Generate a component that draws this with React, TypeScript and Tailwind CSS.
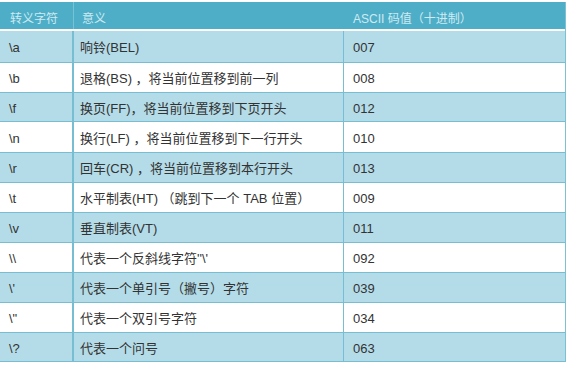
const rows = [
  ['\\a', '响铃(BEL)', '007'],
  ['\\b', '退格(BS) ，将当前位置移到前一列', '008'],
  ['\\f', '换页(FF)，将当前位置移到下页开头', '012'],
  ['\\n', '换行(LF) ，将当前位置移到下一行开头', '010'],
  ['\\r', '回车(CR) ，将当前位置移到本行开头', '013'],
  ['\\t', '水平制表(HT) （跳到下一个 TAB 位置）', '009'],
  ['\\v', '垂直制表(VT)', '011'],
  ['\\\\', '代表一个反斜线字符\'\'\\\'', '092'],
  ['\\\'', '代表一个单引号（撇号）字符', '039'],
  ['\\"', '代表一个双引号字符', '034'],
  ['\\?', '代表一个问号', '063'],
];

const heights = ['h-[32px]', 'h-[30px]', 'h-[29px]', 'h-[31px]', 'h-[30px]', 'h-[30px]', 'h-[30px]', 'h-[30px]', 'h-[30px]', 'h-[30px]', 'h-[29px]'];

export default function App() {
  return (
    <div className="w-[571px] h-[368px] bg-white overflow-hidden pt-[2px] font-['Liberation_Sans','Noto_Sans_CJK_SC',sans-serif]">
      <div className="w-[566px] border-r border-[#7cc0d3]">
        <div className="flex h-[29px] bg-[#4eaec7] text-[12px] text-[#cfeaf2] border-b-2 border-white">
          <div className="w-[74px] flex items-center pl-[10px] pt-[6px] border-r border-[#78c2d5]">转义字符</div>
          <div className="w-[270px] flex items-center pl-[8px] pt-[6px] border-r border-[#4eaec7]">意义</div>
          <div className="flex-1 flex items-center pl-[9px] pt-[6px]">ASCII 码值（十进制）</div>
        </div>
        {rows.map((r, i) => (
          <div
            key={i}
            className={`flex text-[13px] text-[#333] border-b border-[#78bed2] ${heights[i]} ${i % 2 === 0 ? 'bg-[#b4dce8]' : 'bg-white'}`}
          >
            <div className="w-[74px] flex items-center pl-[9px] pt-[3px] border-r-2 border-[#78bed2]">{r[0]}</div>
            <div className="w-[270px] flex items-center pl-[6px] pt-[3px] border-r border-[#78bed2] whitespace-nowrap">{r[1]}</div>
            <div className="flex-1 flex items-center pl-[9px] pt-[3px]">{r[2]}</div>
          </div>
        ))}
      </div>
    </div>
  );
}
